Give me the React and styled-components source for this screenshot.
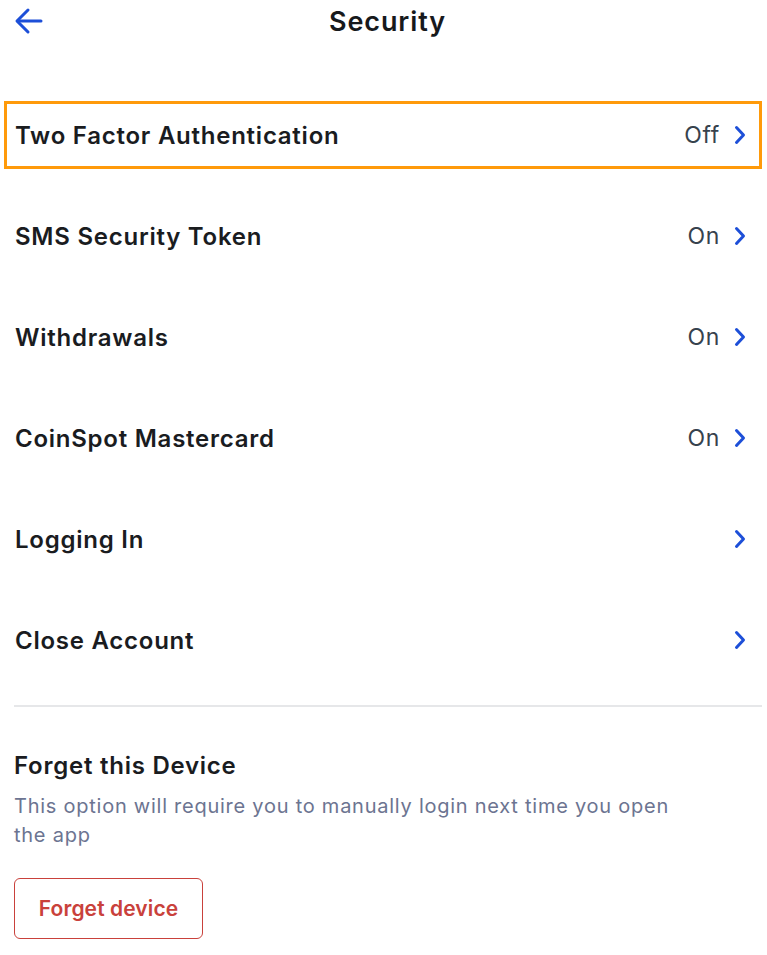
import React from "react";
import styled, { createGlobalStyle } from "styled-components";

const Global = createGlobalStyle`
  html, body { margin: 0; padding: 0; background: #ffffff; }
  body { font-family: Inter, "Noto Sans", sans-serif; color: #17191c; }
  * { box-sizing: border-box; }
`;

const Page = styled.div`
  width: 767px;
  min-height: 955px;
  background: #fff;
  display: flex;
  flex-direction: column;
`;

const Header = styled.header`
  position: relative;
  height: 42px;
  display: flex;
  align-items: center;
  justify-content: center;
`;

const BackButton = styled.button`
  position: absolute;
  left: 11px;
  top: 4px;
  width: 36px;
  height: 34px;
  border: 0;
  background: transparent;
  padding: 0;
  display: flex;
  align-items: center;
  justify-content: center;
  color: #1d4fd8;
`;

const Title = styled.h1`
  margin: 0 0 0 8px;
  font-size: 27px;
  font-weight: 600;
  color: #17191c;
  letter-spacing: 0.9px;
  line-height: 1;
`;

const List = styled.div`
  margin-top: 59px;
  padding: 0 5px 0 4px;
  display: flex;
  flex-direction: column;
  gap: 33px;
`;

const Row = styled.div`
  height: 68px;
  display: flex;
  align-items: center;
  justify-content: space-between;
  padding: 0 13px 0 8px;
  border: 3px solid ${(p) => (p.$active ? "#ff9a0a" : "transparent")};
`;

const Label = styled.span`
  font-size: 24px;
  font-weight: 600;
  color: #1a1c1f;
  letter-spacing: 0.75px;
`;

const Right = styled.span`
  display: flex;
  align-items: center;
  gap: 14px;
`;

const Status = styled.span`
  font-size: 23px;
  font-weight: 400;
  color: #37424d;
  letter-spacing: 0.7px;
`;

const Chevron = styled.svg`
  width: 12px;
  height: 20px;
  color: #1d4fd8;
`;

const Divider = styled.hr`
  margin: 31px 5px 0 14px;
  border: 0;
  height: 2px;
  background: #e6e7e9;
`;

const Section = styled.section`
  padding: 43px 14px 0 14px;
  display: flex;
  flex-direction: column;
  align-items: flex-start;
`;

const SectionTitle = styled.h2`
  margin: 0;
  font-size: 24px;
  font-weight: 600;
  color: #1a1c1f;
  letter-spacing: 0.75px;
  line-height: 32px;
`;

const Description = styled.p`
  margin: 10px 0 0 0;
  max-width: 690px;
  font-size: 20px;
  font-weight: 400;
  line-height: 29px;
  color: #6c7491;
  letter-spacing: 0.75px;
`;

const DangerButton = styled.button`
  margin-top: 28px;
  width: 189px;
  height: 61px;
  border: 1.5px solid #c9413b;
  border-radius: 6px;
  background: #fff;
  color: #c9413b;
  font-family: Inter, "Noto Sans", sans-serif;
  font-size: 21px;
  font-weight: 600;
  letter-spacing: 0.1px;
`;

const rows = [
  { label: "Two Factor Authentication", status: "Off", active: true },
  { label: "SMS Security Token", status: "On" },
  { label: "Withdrawals", status: "On" },
  { label: "CoinSpot Mastercard", status: "On" },
  { label: "Logging In" },
  { label: "Close Account" },
];

export default function App() {
  return (
    <Page>
      <Global />
      <Header>
        <BackButton aria-label="Back">
          <svg width="30" height="28" viewBox="0 0 30 28" fill="none" stroke="currentColor" strokeWidth="3" strokeLinecap="round" strokeLinejoin="round">
            <path d="M27 14H4" />
            <path d="M14 3L3 14l11 11" />
          </svg>
        </BackButton>
        <Title>Security</Title>
      </Header>
      <List>
        {rows.map((r) => (
          <Row key={r.label} $active={r.active}>
            <Label>{r.label}</Label>
            <Right>
              {r.status && <Status>{r.status}</Status>}
              <Chevron viewBox="0 0 12 20" fill="none" stroke="currentColor" strokeWidth="3" strokeLinecap="round" strokeLinejoin="round">
                <path d="M2.5 2.5L9.5 10l-7 7.5" />
              </Chevron>
            </Right>
          </Row>
        ))}
      </List>
      <Divider />
      <Section>
        <SectionTitle>Forget this Device</SectionTitle>
        <Description>
          This option will require you to manually login next time you open the app
        </Description>
        <DangerButton>Forget device</DangerButton>
      </Section>
    </Page>
  );
}
